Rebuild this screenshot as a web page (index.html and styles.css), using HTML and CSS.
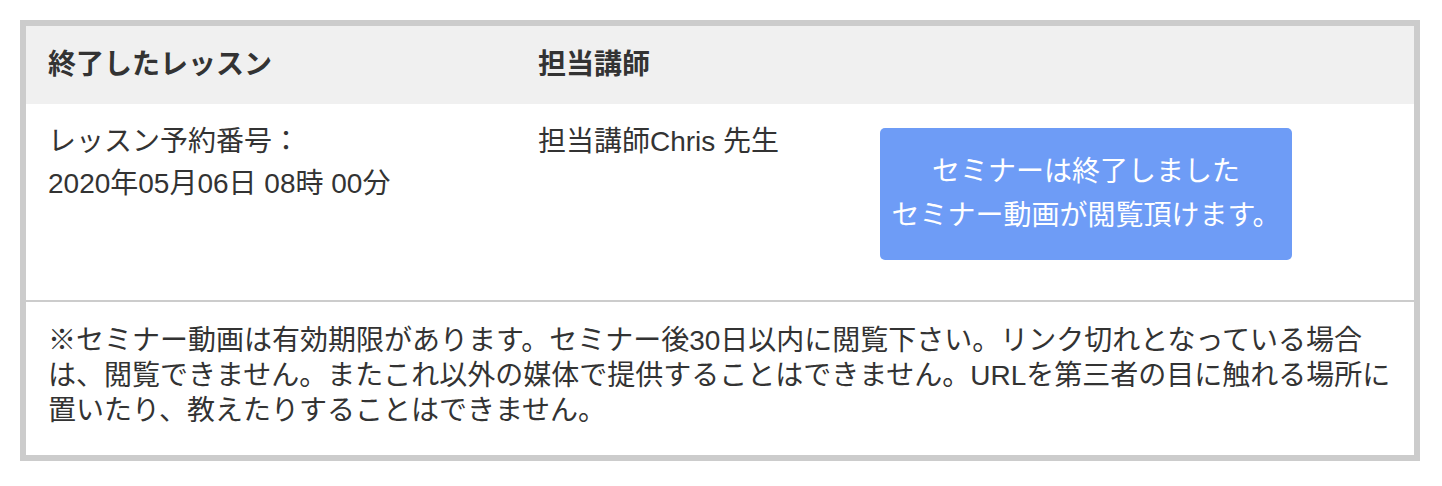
FILE: index.html
```html
<!DOCTYPE html>
<html lang="ja">
<head>
<meta charset="utf-8">
<title>終了したレッスン</title>
<link rel="stylesheet" href="styles.css">
</head>
<body>
<div class="lessons">
  <div class="head-row">
    <div class="cell c1">終了したレッスン</div>
    <div class="cell c2">担当講師</div>
    <div class="cell c3"></div>
  </div>
  <div class="body-row">
    <div class="cell c1">レッスン予約番号：<br>2020年05月06日 08時 00分</div>
    <div class="cell c2">担当講師Chris 先生</div>
    <div class="cell c3">
      <div class="btn">セミナーは終了しました<br>セミナー動画が閲覧頂けます。</div>
    </div>
  </div>
  <div class="note">※セミナー動画は有効期限があります。セミナー後30日以内に閲覧下さい。リンク切れとなっている場合は、閲覧できません。またこれ以外の媒体で提供することはできません。URLを第三者の目に触れる場所に置いたり、教えたりすることはできません。</div>
</div>
</body>
</html>
```

FILE: styles.css
```css
html, body {
  margin: 0;
  padding: 0;
  background: #fff;
}
body {
  padding: 20px 22px 24px 20px;
  font-family: "Liberation Sans", "Noto Sans CJK JP", sans-serif;
  font-size: 28px;
  color: #333;
}
.lessons {
  width: 1400px;
  box-sizing: border-box;
  border: 6px solid #cccccc;
  background: #fff;
}
.head-row,
.body-row {
  display: grid;
  grid-template-columns: 490px 342px 1fr;
}
.head-row {
  background: #f0f0f0;
  height: 78px;
  align-items: center;
}
.head-row .cell {
  font-weight: bold;
  padding: 0 22px;
  line-height: 40px;
}
.body-row {
  border-bottom: 2px solid #cccccc;
}
.body-row .cell {
  padding: 17px 22px 0;
  line-height: 42px;
}
.body-row .c3 {
  padding: 24px 22px 40px;
}
.btn {
  width: 412px;
  height: 132px;
  box-sizing: border-box;
  background: #6e9cf6;
  border-radius: 5px;
  color: #fff;
  text-align: center;
  line-height: 44px;
  display: flex;
  align-items: center;
  justify-content: center;
}
.note {
  padding: 21px 20px 27px 22px;
  line-height: 35px;
}
```
